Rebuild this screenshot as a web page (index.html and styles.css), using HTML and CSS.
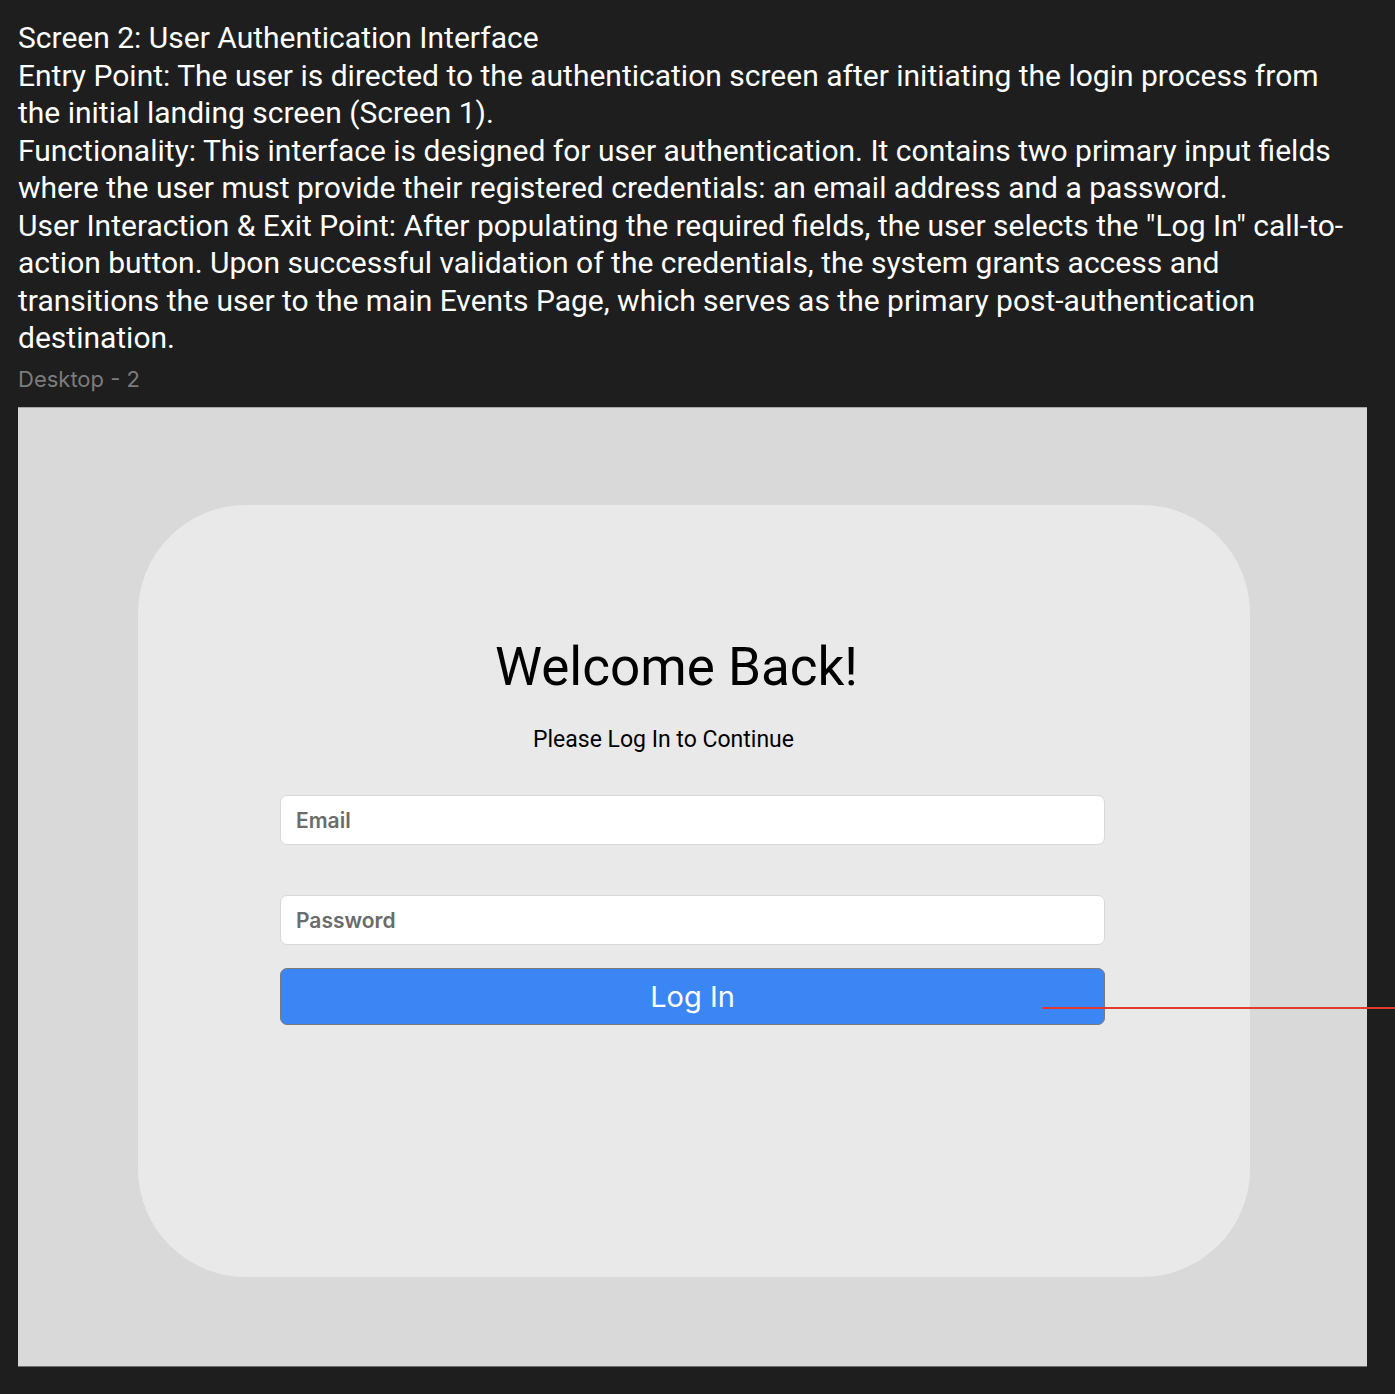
FILE: index.html
```html
<!DOCTYPE html>
<html lang="en">
<head>
<meta charset="utf-8">
<title>Screen 2: User Authentication Interface</title>
<link rel="stylesheet" href="styles.css">
</head>
<body>
  <div class="page">
    <div class="notes">
      <p>Screen 2: User Authentication Interface</p>
      <p>Entry Point: The user is directed to the authentication screen after initiating the login process from the initial landing screen (Screen 1).</p>
      <p>Functionality: This interface is designed for user authentication. It contains two primary input fields where the user must provide their registered credentials: an email address and a password.</p>
      <p>User Interaction &amp; Exit Point: After populating the required fields, the user selects the "Log In" call-to-action button. Upon successful validation of the credentials, the system grants access and transitions the user to the main Events Page, which serves as the primary post-authentication destination.</p>
    </div>
    <div class="frame-label">Desktop - 2</div>
    <div class="frame">
      <div class="card">
        <h1 class="title">Welcome Back!</h1>
        <p class="subtitle">Please Log In to Continue</p>
        <div class="field email-field"><span class="placeholder">Email</span></div>
        <div class="field password-field"><span class="placeholder">Password</span></div>
        <button class="login-btn" type="button">Log In</button>
      </div>
    </div>
  </div>
  <div class="flow-link"></div>
</body>
</html>
```
FILE: styles.css
```css
html, body {
  margin: 0;
  padding: 0;
  background: #1e1e1e;
}
body {
  position: relative;
  width: 1395px;
  height: 1394px;
  overflow: hidden;
}
.page {
  padding: 19px 0 0 18px;
}
.notes {
  width: 1340px;
  color: #ffffff;
  font-family: Roboto, "Liberation Sans", sans-serif;
  font-size: 30px;
  line-height: 37.5px;
}
.notes p {
  margin: 0;
}
.frame-label {
  margin-top: 7.5px;
  height: 30px;
  line-height: 30px;
  color: #7c7c7c;
  font-family: Inter, "Liberation Sans", sans-serif;
  font-size: 22px;
}
.frame {
  margin-top: 13px;
  width: 1349px;
  height: 960px;
  background: #d9d9d9;
  box-sizing: border-box;
  border-top: 1px solid #a8a8a8;
  border-bottom: 1px solid #6e6e6e;
  padding-top: 97px;
  padding-left: 120px;
}
.card {
  width: 1112px;
  height: 772px;
  background: #e9e9e9;
  border-radius: 108px;
  box-sizing: border-box;
  padding-top: 130px;
  padding-left: 142px;
  display: flex;
  flex-direction: column;
  align-items: flex-start;
}
.title {
  margin: 0;
  width: 825px;
  padding-right: 32px;
  box-sizing: border-box;
  text-align: center;
  font-family: Roboto, "Liberation Sans", sans-serif;
  font-weight: 400;
  font-size: 53px;
  line-height: 64px;
  color: #000;
}
.subtitle {
  margin: 26px 0 0 0;
  width: 825px;
  padding-right: 58px;
  box-sizing: border-box;
  text-align: center;
  font-family: Roboto, "Liberation Sans", sans-serif;
  font-size: 23px;
  line-height: 30px;
  color: #000;
}
.field {
  width: 825px;
  height: 50px;
  box-sizing: border-box;
  background: #fff;
  border: 1px solid #d8d8d8;
  border-radius: 7px;
  padding-left: 15px;
  display: flex;
  align-items: center;
}
.email-field {
  margin-top: 40px;
}
.password-field {
  margin-top: 50px;
}
.placeholder {
  font-family: Inter, "Liberation Sans", sans-serif;
  font-weight: 600;
  font-size: 21px;
  color: #6b6b6b;
}
.login-btn {
  margin-top: 23px;
  width: 825px;
  height: 57px;
  box-sizing: border-box;
  background: #3b86f4;
  border: 1px solid #7a7a7a;
  border-radius: 7px;
  color: #ffffff;
  font-family: Inter, "Liberation Sans", sans-serif;
  font-size: 29px;
  font-weight: 400;
  padding: 0;
  cursor: pointer;
}
.flow-link {
  position: absolute;
  left: 1042px;
  top: 1007px;
  width: 353px;
  height: 2px;
  background: #e5392f;
}
```
